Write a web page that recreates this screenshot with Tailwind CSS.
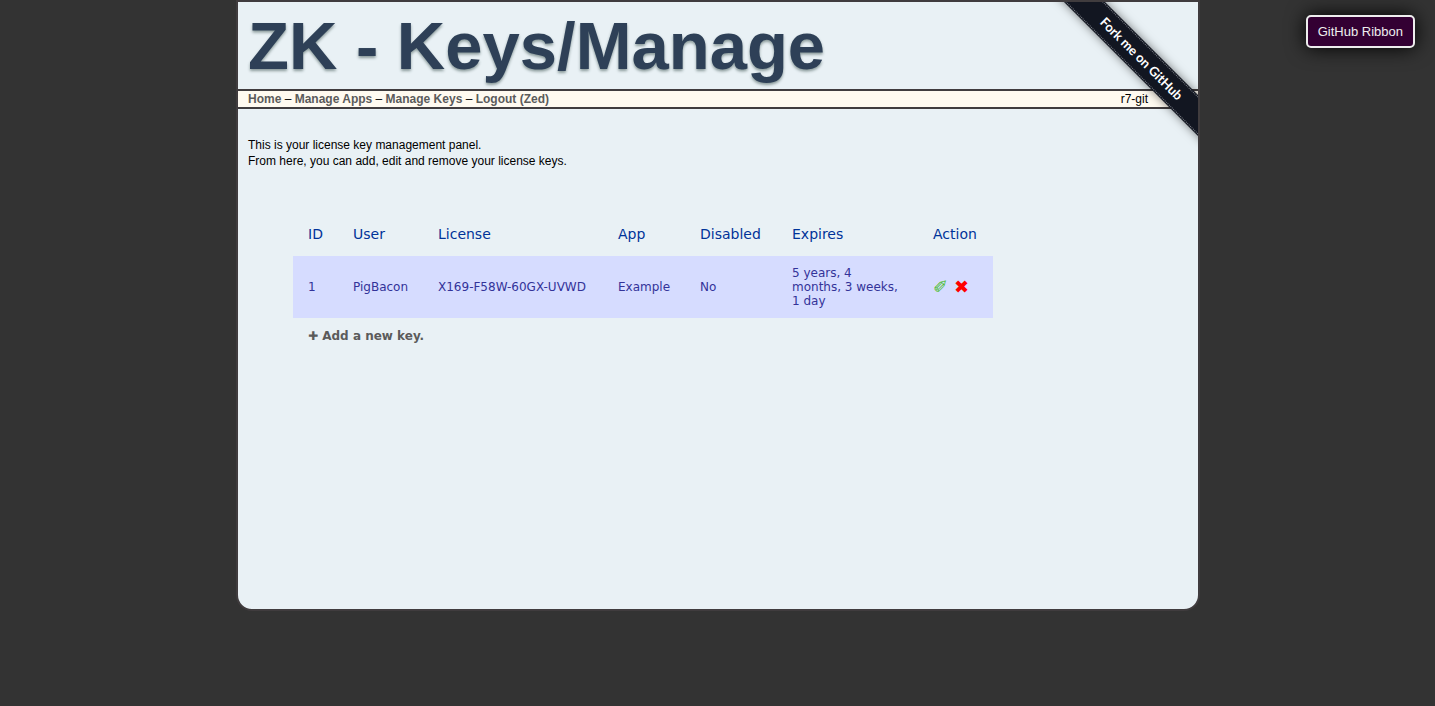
<!DOCTYPE html>
<html lang="en">
<head>
<meta charset="utf-8">
<title>ZK - Keys/Manage</title>
<script src="https://cdn.jsdelivr.net/npm/@tailwindcss/browser@4"></script>
</head>
<body class="min-h-screen bg-[#333333] pl-px font-['Liberation_Sans',Arial,sans-serif] text-xs text-black">
<div class="relative mx-auto min-h-[611px] w-full max-w-[964px] overflow-hidden rounded-b-2xl border-2 border-[#403c3e] bg-[#e9f1f5]">
  <header class="px-[10px]">
    <h1 class="h-[87px] text-[67px] leading-[87px] font-bold whitespace-nowrap text-[#2e4057] [text-shadow:0_2px_3px_#8a9a9a]">ZK - Keys/Manage</h1>
  </header>
  <nav class="flex h-5 items-center justify-between border-y-2 border-[#403c3e] bg-[#fffaf0] pr-[50px] pl-[10px] leading-4">
    <div>
      <a href="#" class="font-bold text-[#5b5b5b]">Home</a> –
      <a href="#" class="font-bold text-[#5b5b5b]">Manage Apps</a> –
      <a href="#" class="font-bold text-[#5b5b5b]">Manage Keys</a> –
      <a href="#" class="font-bold text-[#5b5b5b]">Logout (Zed)</a>
    </div>
    <span>r7-git</span>
  </nav>
  <main class="px-[10px] pt-7">
    <p class="leading-4">This is your license key management panel.<br>From here, you can add, edit and remove your license keys.</p>
    <table class="mt-[43px] ml-[45px] w-[700px] table-fixed border-collapse text-left font-['DejaVu_Sans',sans-serif] leading-[14px] text-[#333399]">
      <colgroup>
        <col class="w-[45px]"><col class="w-[85px]"><col class="w-[180px]"><col class="w-[82px]"><col class="w-[92px]"><col class="w-[141px]"><col class="w-[75px]">
      </colgroup>
      <thead>
        <tr class="h-11 text-sm text-[#003399]">
          <th class="px-[15px] font-normal">ID</th>
          <th class="px-[15px] font-normal">User</th>
          <th class="px-[15px] font-normal">License</th>
          <th class="px-[15px] font-normal">App</th>
          <th class="px-[15px] font-normal">Disabled</th>
          <th class="px-[15px] font-normal">Expires</th>
          <th class="px-[15px] font-normal">Action</th>
        </tr>
      </thead>
      <tbody>
        <tr class="bg-[#d6dcff]">
          <td class="px-[15px] py-[10px]">1</td>
          <td class="px-[15px] py-[10px]">PigBacon</td>
          <td class="px-[15px] py-[10px] whitespace-nowrap">X169-F58W-60GX-UVWD</td>
          <td class="px-[15px] py-[10px]">Example</td>
          <td class="px-[15px] py-[10px]">No</td>
          <td class="px-[15px] py-[10px]">5 years, 4 months, 3 weeks, 1 day</td>
          <td class="px-[15px] py-[10px]"><div class="flex gap-[6px] text-[18px] leading-[14px]"><a href="#" aria-label="Edit" class="text-[#4dbd33]">✐</a><a href="#" aria-label="Remove" class="text-[#ff0000]">✖</a></div></td>
        </tr>
      </tbody>
      <tfoot>
        <tr><td colspan="7" class="px-[15px] py-[11px]"><a href="#" class="font-bold text-[#5b5b5b]">✚ Add a new key.</a></td></tr>
      </tfoot>
    </table>
  </main>
  <div class="absolute -top-[24px] -right-[42px] h-[160px] w-[200px]">
    <a href="#" class="absolute top-[65px] -left-[25px] flex h-[29px] w-[250px] rotate-45 items-center justify-center bg-[#121621] shadow-[0_0_10px_rgba(0,0,0,0.5)]">
      <span class="flex h-[27px] w-full items-center justify-center border-y border-dotted border-[#7b7e86] pl-1 font-[Lato,sans-serif] text-[13px] font-bold text-white">Fork me on GitHub</span>
    </a>
  </div>
</div>
<button type="button" class="absolute top-[15px] right-5 h-[33px] rounded-[5px] border-2 border-[#eeeeee] bg-[#330033] px-[10px] text-[13px] text-[#eeeeee] shadow-[0_0_20px_#000000]">GitHub Ribbon</button>
</body>
</html>
